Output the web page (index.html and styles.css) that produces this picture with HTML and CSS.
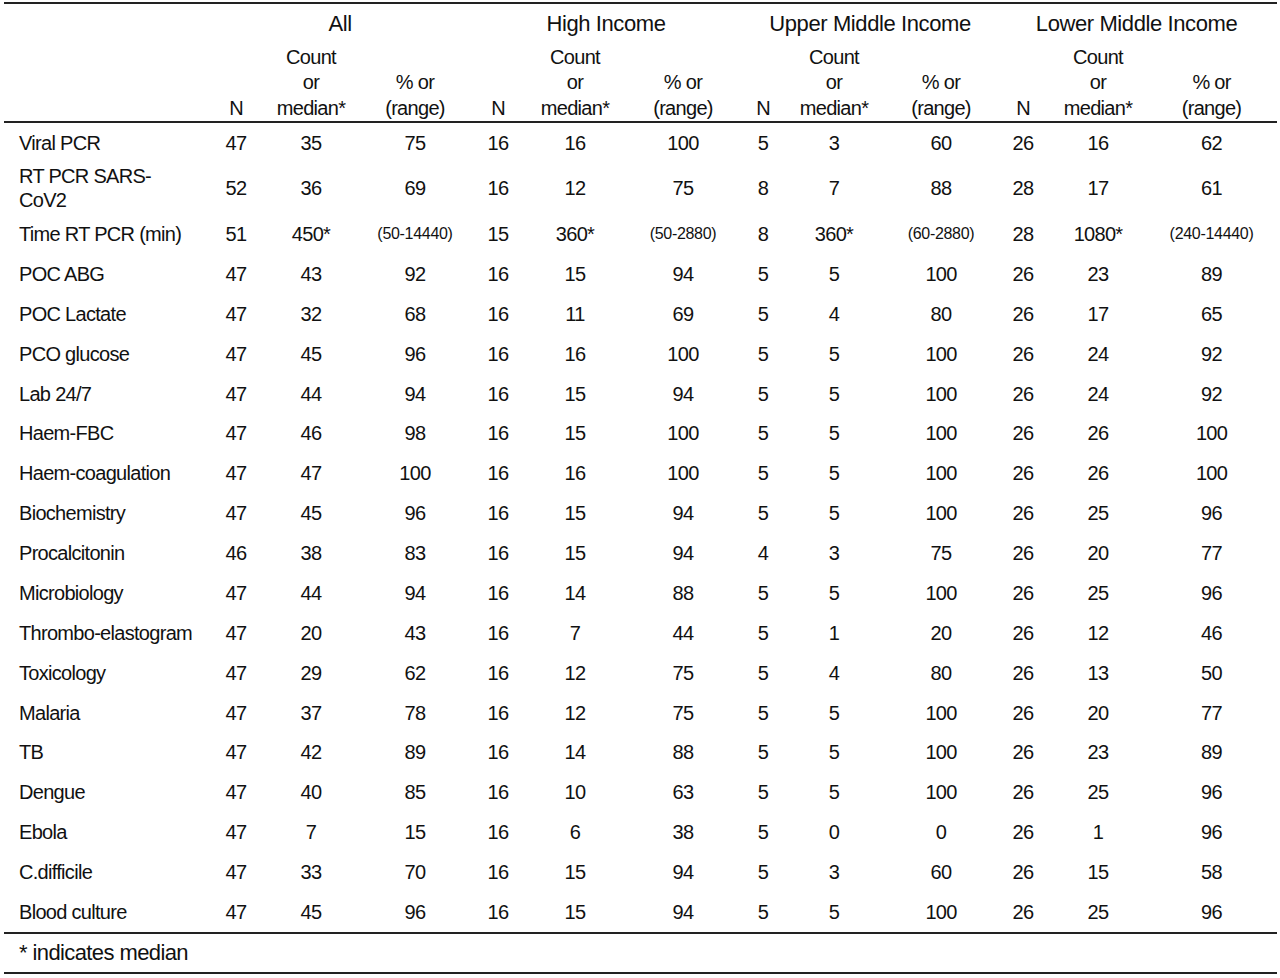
FILE: index.html
```html
<!DOCTYPE html>
<html lang="en">
<head>
  <meta charset="UTF-8" />
  <title>Laboratory tests by income group</title>
  <link rel="stylesheet" href="styles.css">
</head>
<body>
  <div class="wrap">
    <table class="results">
      <colgroup>
        <col class="c-label">
        <col style="width:48px"><col style="width:102px"><col style="width:106px">
        <col style="width:60px"><col style="width:94px"><col style="width:122px">
        <col style="width:38px"><col style="width:104px"><col style="width:110px">
        <col style="width:54px"><col style="width:96px"><col style="width:131px">
      </colgroup>
      <thead>
        <tr class="groups">
          <th></th>
          <th colspan="3">All</th>
          <th colspan="3">High Income</th>
          <th colspan="3">Upper Middle Income</th>
          <th colspan="3">Lower Middle Income</th>
        </tr>
        <tr class="cols">
          <th></th>
          <th>N</th><th>Count<br>or<br>median*</th><th>% or<br>(range)</th>
          <th>N</th><th>Count<br>or<br>median*</th><th>% or<br>(range)</th>
          <th>N</th><th>Count<br>or<br>median*</th><th>% or<br>(range)</th>
          <th>N</th><th>Count<br>or<br>median*</th><th>% or<br>(range)</th>
        </tr>
      </thead>
      <tbody>
        <tr class="first"><td>Viral PCR</td><td>47</td><td>35</td><td>75</td><td>16</td><td>16</td><td>100</td><td>5</td><td>3</td><td>60</td><td>26</td><td>16</td><td>62</td></tr>
        <tr><td>RT PCR SARS-<br>CoV2</td><td>52</td><td>36</td><td>69</td><td>16</td><td>12</td><td>75</td><td>8</td><td>7</td><td>88</td><td>28</td><td>17</td><td>61</td></tr>
        <tr class="time"><td>Time RT PCR (min)</td><td>51</td><td>450*</td><td class="range">(50-14440)</td><td>15</td><td>360*</td><td class="range">(50-2880)</td><td>8</td><td>360*</td><td class="range">(60-2880)</td><td>28</td><td>1080*</td><td class="range">(240-14440)</td></tr>
        <tr><td>POC ABG</td><td>47</td><td>43</td><td>92</td><td>16</td><td>15</td><td>94</td><td>5</td><td>5</td><td>100</td><td>26</td><td>23</td><td>89</td></tr>
        <tr><td>POC Lactate</td><td>47</td><td>32</td><td>68</td><td>16</td><td>11</td><td>69</td><td>5</td><td>4</td><td>80</td><td>26</td><td>17</td><td>65</td></tr>
        <tr><td>PCO glucose</td><td>47</td><td>45</td><td>96</td><td>16</td><td>16</td><td>100</td><td>5</td><td>5</td><td>100</td><td>26</td><td>24</td><td>92</td></tr>
        <tr><td>Lab 24/7</td><td>47</td><td>44</td><td>94</td><td>16</td><td>15</td><td>94</td><td>5</td><td>5</td><td>100</td><td>26</td><td>24</td><td>92</td></tr>
        <tr><td>Haem-FBC</td><td>47</td><td>46</td><td>98</td><td>16</td><td>15</td><td>100</td><td>5</td><td>5</td><td>100</td><td>26</td><td>26</td><td>100</td></tr>
        <tr><td>Haem-coagulation</td><td>47</td><td>47</td><td>100</td><td>16</td><td>16</td><td>100</td><td>5</td><td>5</td><td>100</td><td>26</td><td>26</td><td>100</td></tr>
        <tr><td>Biochemistry</td><td>47</td><td>45</td><td>96</td><td>16</td><td>15</td><td>94</td><td>5</td><td>5</td><td>100</td><td>26</td><td>25</td><td>96</td></tr>
        <tr><td>Procalcitonin</td><td>46</td><td>38</td><td>83</td><td>16</td><td>15</td><td>94</td><td>4</td><td>3</td><td>75</td><td>26</td><td>20</td><td>77</td></tr>
        <tr><td>Microbiology</td><td>47</td><td>44</td><td>94</td><td>16</td><td>14</td><td>88</td><td>5</td><td>5</td><td>100</td><td>26</td><td>25</td><td>96</td></tr>
        <tr><td>Thrombo-elastogram</td><td>47</td><td>20</td><td>43</td><td>16</td><td>7</td><td>44</td><td>5</td><td>1</td><td>20</td><td>26</td><td>12</td><td>46</td></tr>
        <tr><td>Toxicology</td><td>47</td><td>29</td><td>62</td><td>16</td><td>12</td><td>75</td><td>5</td><td>4</td><td>80</td><td>26</td><td>13</td><td>50</td></tr>
        <tr><td>Malaria</td><td>47</td><td>37</td><td>78</td><td>16</td><td>12</td><td>75</td><td>5</td><td>5</td><td>100</td><td>26</td><td>20</td><td>77</td></tr>
        <tr><td>TB</td><td>47</td><td>42</td><td>89</td><td>16</td><td>14</td><td>88</td><td>5</td><td>5</td><td>100</td><td>26</td><td>23</td><td>89</td></tr>
        <tr><td>Dengue</td><td>47</td><td>40</td><td>85</td><td>16</td><td>10</td><td>63</td><td>5</td><td>5</td><td>100</td><td>26</td><td>25</td><td>96</td></tr>
        <tr><td>Ebola</td><td>47</td><td>7</td><td>15</td><td>16</td><td>6</td><td>38</td><td>5</td><td>0</td><td>0</td><td>26</td><td>1</td><td>96</td></tr>
        <tr><td>C.difficile</td><td>47</td><td>33</td><td>70</td><td>16</td><td>15</td><td>94</td><td>5</td><td>3</td><td>60</td><td>26</td><td>15</td><td>58</td></tr>
        <tr><td>Blood culture</td><td>47</td><td>45</td><td>96</td><td>16</td><td>15</td><td>94</td><td>5</td><td>5</td><td>100</td><td>26</td><td>25</td><td>96</td></tr>
      </tbody>
      <tfoot>
        <tr><td colspan="13">* indicates median</td></tr>
      </tfoot>
    </table>
  </div>
</body>
</html>
```

FILE: styles.css
```css
body {
  margin: 0;
  background: #fff;
  color: #111;
  font-family: "Liberation Sans", Arial, sans-serif;
  font-size: 20px;
  letter-spacing: -0.7px;
}

.wrap {
  padding: 2px 3px 0 4px;
}

.results {
  width: 1273px;
  border-collapse: collapse;
  table-layout: fixed;
}

.c-label {
  width: 208px;
}

.results th {
  font-weight: normal;
  text-align: center;
  padding: 0;
}

.results thead tr.groups th {
  height: 40px;
  font-size: 22px;
  letter-spacing: -0.4px;
  vertical-align: middle;
  border-top: 2px solid #222;
}

.results thead tr.cols th {
  height: 77px;
  line-height: 25.5px;
  vertical-align: bottom;
  padding-bottom: 0;
  border-bottom: 2px solid #222;
}

.results td {
  height: 35.875px;
  padding: 2px 0;
  line-height: 24px;
  text-align: center;
  vertical-align: middle;
}

.results td:first-child {
  text-align: left;
  padding-left: 15px;
}

.results tbody tr.first td {
  height: 35px;
}

.results tbody tr.time td {
  height: 36px;
}

.results td.range {
  font-size: 16px;
  letter-spacing: -0.3px;
}

.results tbody tr:last-child td {
  border-bottom: 2px solid #222;
}

.results tfoot td {
  height: 34px;
  font-size: 22px;
  letter-spacing: -0.6px;
  border-bottom: 2px solid #222;
}
```
